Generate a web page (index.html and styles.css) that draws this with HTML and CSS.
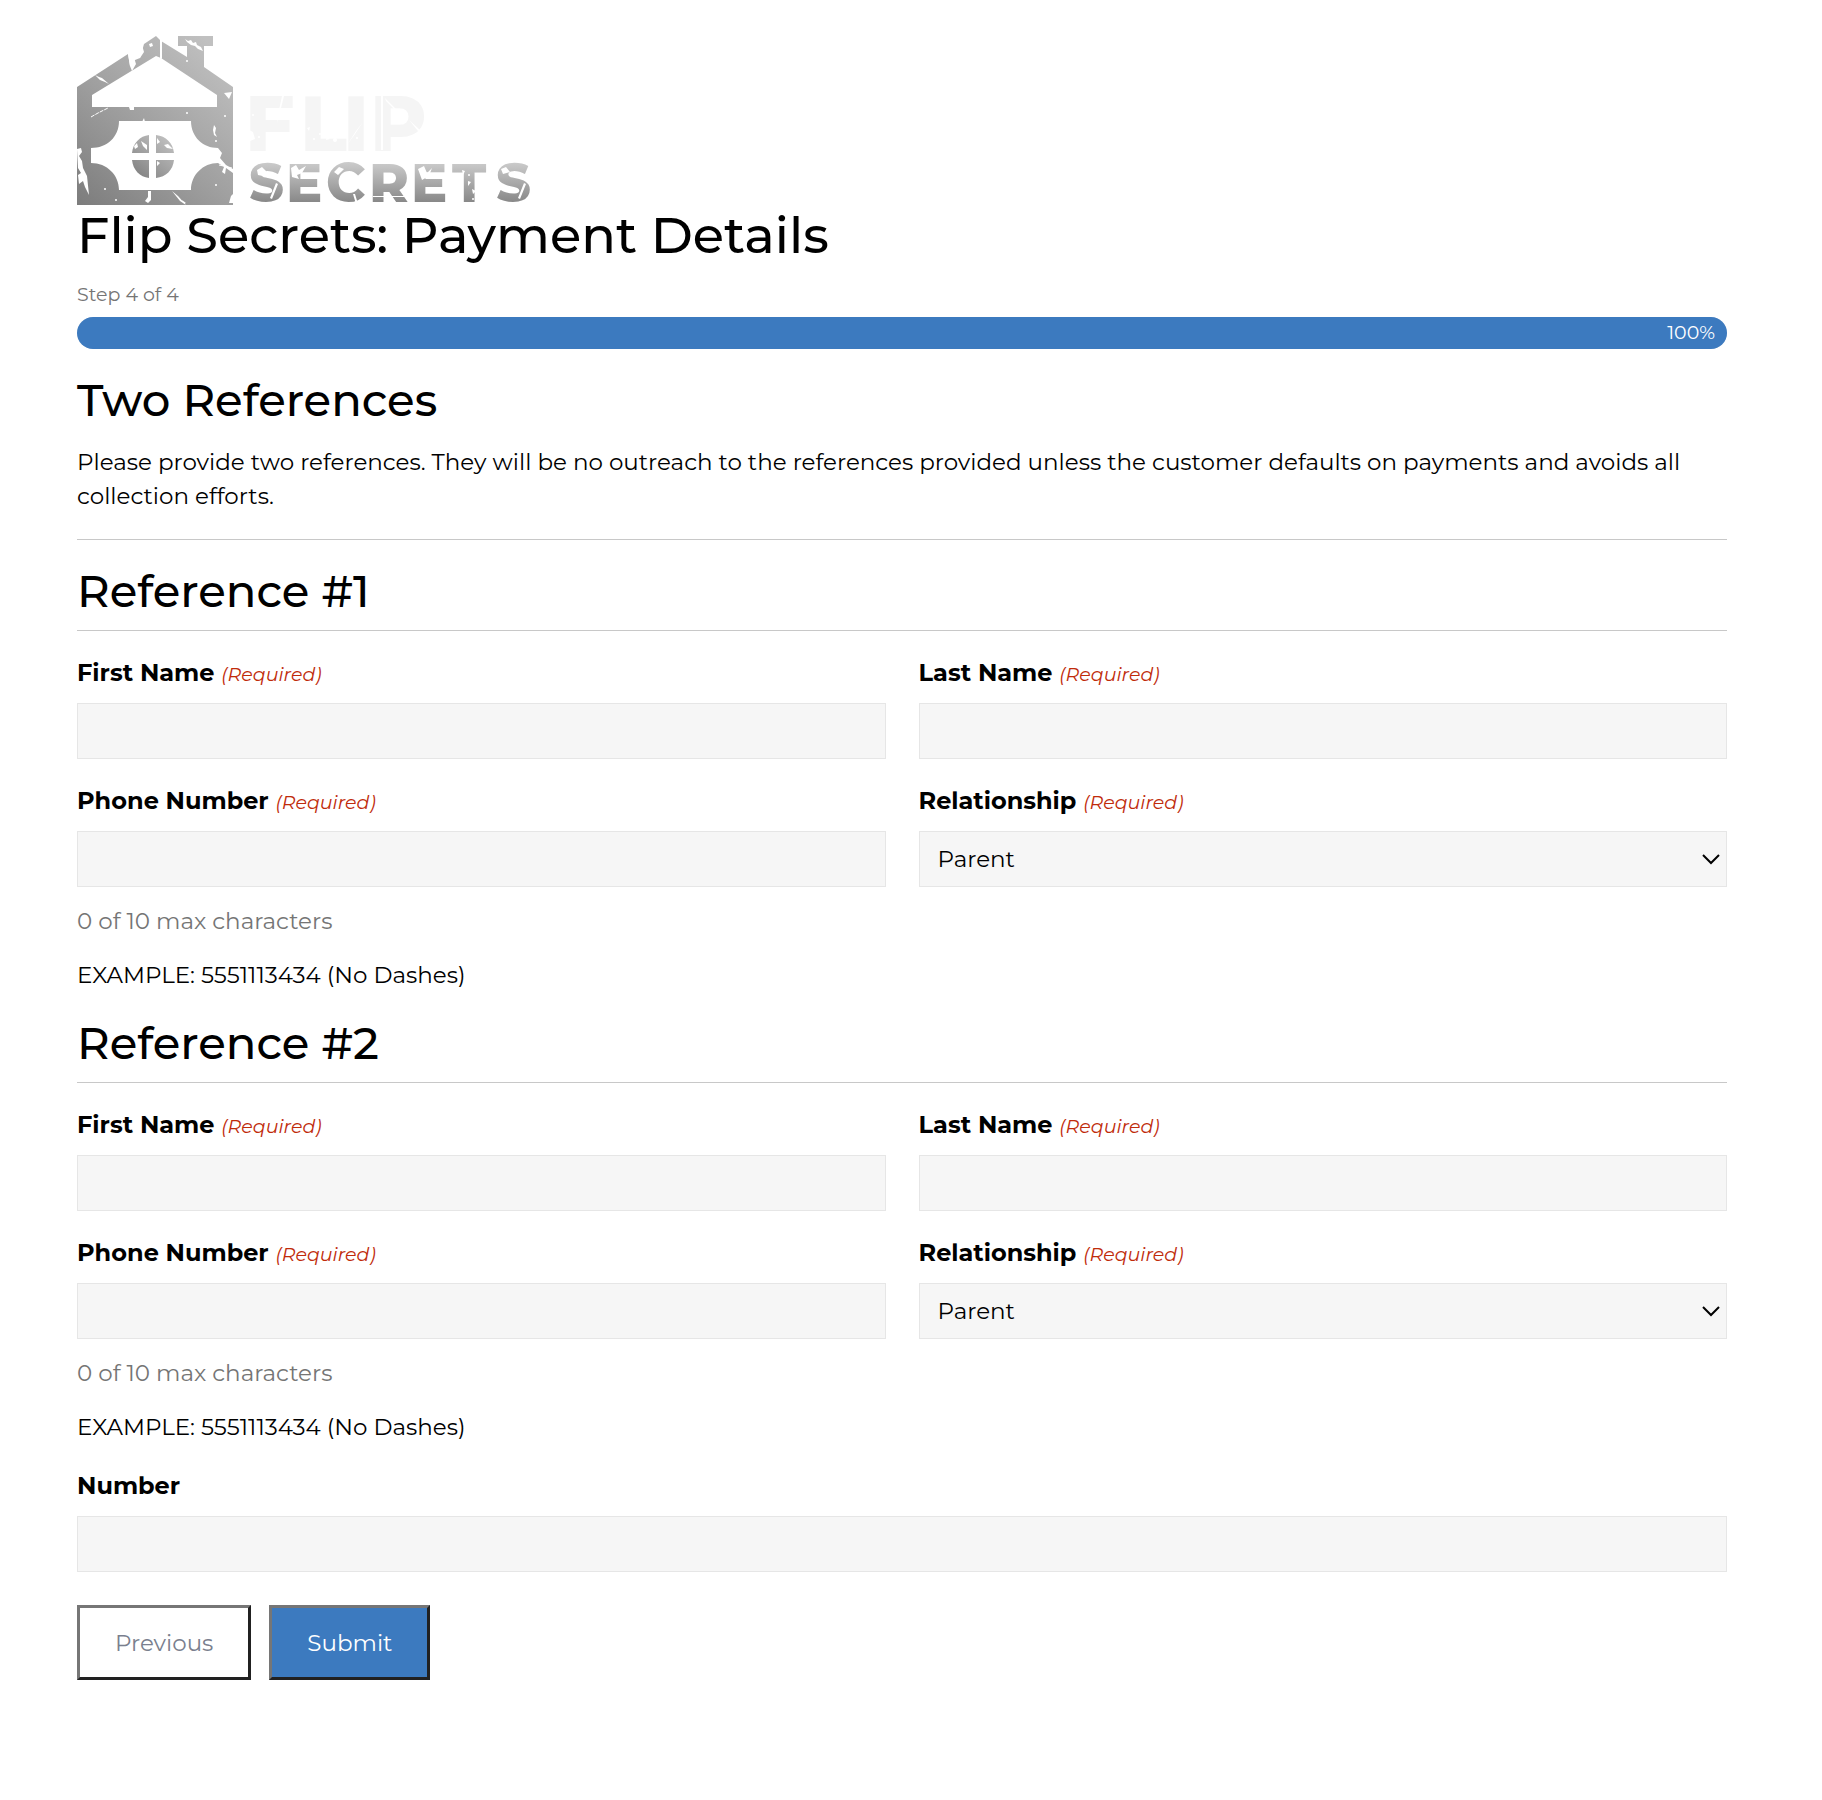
FILE: index.html
```html
<!DOCTYPE html>
<html lang="en">
<head>
<meta charset="utf-8">
<meta name="viewport" content="width=device-width, initial-scale=1">
<title>Flip Secrets: Payment Details</title>
<link rel="stylesheet" href="styles.css">
</head>
<body>
<main class="page">
  <svg class="logo" viewBox="0 0 464 170" role="img" aria-label="Flip Secrets">
    <defs>
      <linearGradient id="house" x1="0" y1="1" x2="0.8" y2="0">
        <stop offset="0" stop-color="#7c7c7c"/>
        <stop offset="0.5" stop-color="#a0a0a0"/>
        <stop offset="1" stop-color="#c0c0c0"/>
      </linearGradient>
      <linearGradient id="word" gradientUnits="userSpaceOnUse" x1="0" y1="126" x2="0" y2="168">
        <stop offset="0" stop-color="#cccccc"/>
        <stop offset="1" stop-color="#858585"/>
      </linearGradient>
    </defs>
    <path fill="url(#house)" fill-rule="evenodd" d="M0 51 51 18 53 30 58 24 63 22 67 8 79 0 83 4 84 5 110 21V10H101V0H136V10H127V31L156 51V169H0ZM15 59V71H140V59L84 22 79 20ZM42 85C42 101 30 112 14 112V127C30 127 42 139 42 154H114C114 139 126 127 141 127V112C126 112 114 101 114 85Z"/>
    <path fill="url(#house)" d="M72 99V117H55C56 107 63 100 72 99ZM79 99C89 100 96 107 97 117H79ZM55 124H72V142C63 141 56 134 55 124ZM79 124H97C96 134 89 141 79 142Z"/>
    <g class="wear">
      <path d="M83 3 85 5V23L83 22ZM51 18 55 15 59 28 55 35 53 30ZM18 39 22 41 25 42 32 48 28 46 23 44ZM61 12 65 9 67 16 63 22 60 21 63 17ZM72 8 75 7 76 10 73 11Z"/>
      <path d="M108 3 111 5 114 4 116 7 119 6 120 9 124 11 126 15 121 13 118 10 114 9 110 6ZM147 57 155 56 152 63ZM65 86 67 82 68 86ZM52 71H57V74H53Z"/>
      <path d="M137 89 139 92 138 97 140 101 137 99 136 94ZM0 113 4 112 5 116 2 120 5 125 6 132 10 140 12 159 8 151 6 145 2 148 1 139 4 137 1 132ZM141 112 145 117 143 122 149 129 156 133V137L149 132 148 138 145 136 147 131 141 127ZM71 155 74 155 74 164 71 167 68 165 71 161ZM95 155 101 160 109 169 103 165ZM154 160 156 158V167L152 167ZM105 164 109 167 107 168Z"/>
      <path d="M64 105 70 109V114L66 110ZM57 110 60 107 61 111 58 113ZM80 102 83 106 80 108ZM87 109 91 108 96 113 90 112ZM80 125 83 127 80 130Z"/>
      <path class="scratch" d="M14 81 21 77 31 72M142 129 155 132"/>
      <circle cx="110" cy="25" r="1"/><circle cx="148" cy="80" r="1"/><circle cx="110" cy="77" r="1"/><circle cx="139" cy="105" r="1"/><circle cx="28" cy="153" r="1"/><circle cx="139" cy="149" r="1"/><circle cx="39" cy="164" r="1"/>
    </g>
    <text class="word word-flip" x="168 223 266 293" y="115">FLIP</text>
    <text class="word word-secrets" x="172 209 249 292 334 375 419" y="166">SECRETS</text>
    <g class="wear">
      <path d="M205 60 207 60 200 88 202 74ZM172 94 176 96 178 103 173 105ZM230 92 233 91 232 95ZM250 100 253 103 249 104ZM286 86 278 98 270 109 279 95ZM304 60H306V114H304ZM308 62 320 74 319 75 309 65ZM332 84 343 94 341 95ZM197 78 203 76 208 74 202 83Z"/>
      <path d="M180 134 185 131 190 136 186 140 181 139ZM193 162 199 147 201 148 195 163ZM214 132 219 129 222 134 229 130 225 137 220 139 222 143 215 141ZM257 136 262 131 267 133 261 139ZM276 158 278 158 281 168 279 168ZM341 133 347 130 350 137 355 132 352 140 345 144ZM385 134 388 135 386 139ZM424 133 429 131 433 136 426 138ZM441 162 447 147 449 148 443 163ZM296 160H328V161H296ZM391 145 394 146 391 150ZM395 153 399 155 396 158Z"/>
      <circle cx="182" cy="101" r="1"/><circle cx="237" cy="103" r="1"/><circle cx="243" cy="98" r="1"/><circle cx="258" cy="104" r="2"/><circle cx="280" cy="102" r="1"/><circle cx="176" cy="79" r="1"/><circle cx="392" cy="139" r="1"/><circle cx="396" cy="163" r="1"/>
    </g>
  </svg>

  <form class="form" onsubmit="return false">
    <h1 class="title">Flip Secrets: Payment Details</h1>
    <p class="step">Step 4 of 4</p>
    <div class="progress" role="progressbar" aria-label="Form progress" aria-valuenow="100" aria-valuemin="0" aria-valuemax="100">
      <div class="progress-fill" style="width: 100%">100%</div>
    </div>

    <section class="intro">
      <h2 class="heading">Two References</h2>
      <p class="intro-text">Please provide two references. They will be no outreach to the references provided unless the customer defaults on payments and avoids all collection efforts.</p>
    </section>

    <section class="reference">
      <h2 class="heading heading-ruled">Reference #1</h2>
      <div class="fields">
        <div class="field">
          <label class="label" for="first1">First Name <span class="required">(Required)</span></label>
          <input class="control" id="first1" type="text" required>
        </div>
        <div class="field">
          <label class="label" for="last1">Last Name <span class="required">(Required)</span></label>
          <input class="control" id="last1" type="text" required>
        </div>
        <div class="field">
          <label class="label" for="phone1">Phone Number <span class="required">(Required)</span></label>
          <input class="control" id="phone1" type="text" maxlength="10" required>
          <p class="counter">0 of 10 max characters</p>
          <p class="example">EXAMPLE: 5551113434 (No Dashes)</p>
        </div>
        <div class="field">
          <label class="label" for="relation1">Relationship <span class="required">(Required)</span></label>
          <select class="control select" id="relation1" required><option>Parent</option><option>Sibling</option><option>Friend</option></select>
        </div>
      </div>
    </section>

    <section class="reference">
      <h2 class="heading heading-ruled">Reference #2</h2>
      <div class="fields">
        <div class="field">
          <label class="label" for="first2">First Name <span class="required">(Required)</span></label>
          <input class="control" id="first2" type="text" required>
        </div>
        <div class="field">
          <label class="label" for="last2">Last Name <span class="required">(Required)</span></label>
          <input class="control" id="last2" type="text" required>
        </div>
        <div class="field">
          <label class="label" for="phone2">Phone Number <span class="required">(Required)</span></label>
          <input class="control" id="phone2" type="text" maxlength="10" required>
          <p class="counter">0 of 10 max characters</p>
          <p class="example">EXAMPLE: 5551113434 (No Dashes)</p>
        </div>
        <div class="field">
          <label class="label" for="relation2">Relationship <span class="required">(Required)</span></label>
          <select class="control select" id="relation2" required><option>Parent</option><option>Sibling</option><option>Friend</option></select>
        </div>
      </div>
    </section>

    <div class="field number">
      <label class="label" for="number">Number</label>
      <input class="control" id="number" type="text">
    </div>

    <div class="actions">
      <button class="button button-previous" type="button">Previous</button>
      <button class="button button-submit" type="submit">Submit</button>
    </div>
  </form>
</main>
</body>
</html>
```
FILE: styles.css
```css
*, *::before, *::after { box-sizing: border-box; }

body {
  margin: 0;
  background: #fff;
  color: #000;
  font: 400 23px/34px Montserrat, Inter, sans-serif;
}

h1, h2, p { margin: 0; }

.page { padding: 36px 95px 120px 77px; }

.logo { display: block; width: 464px; max-width: 100%; height: auto; overflow: visible; }
.wear { fill: #fff; }
.scratch { fill: none; stroke: #fff; stroke-width: 1; stroke-dasharray: 4 1; }
.word { font-family: Montserrat, Inter, sans-serif; font-weight: 800; }
.word-flip { font-size: 77px; fill: #f5f5f5; }
.word-secrets { font-size: 54px; fill: url(#word); }

.title { font-size: 51px; font-weight: 500; line-height: 58px; }
.step { margin-top: 17px; color: #757575; font-size: 19px; line-height: 28px; }

.progress { margin-top: 8px; border-radius: 16px; background: #e8e8e8; }
.progress-fill {
  padding-right: 12px;
  border-radius: 16px;
  background: #3c7abf;
  color: #fff;
  font-size: 19px;
  line-height: 32px;
  text-align: right;
}

.heading { font-size: 45px; font-weight: 500; line-height: 56px; }
.intro { margin-top: 23px; padding-bottom: 26px; border-bottom: 1px solid #c8c8c8; }
.intro-text { margin-top: 17px; }

.reference { margin-top: 23px; }
.heading-ruled { padding-bottom: 11px; border-bottom: 1px solid #c8c8c8; }
.fields {
  display: grid;
  grid-template-columns: 1fr 1fr;
  gap: 25px 33px;
  margin-top: 25px;
}
.field { display: flex; flex-direction: column; min-width: 0; }
.label { font-size: 24px; font-weight: 700; line-height: 34px; }
.required { color: #c02b0a; font-size: 19px; font-style: italic; font-weight: 400; line-height: 20px; }

.control {
  width: 100%;
  height: 56px;
  margin: 13px 0 0;
  padding: 0 18px;
  border: 1px solid #e6e6e6;
  border-radius: 0;
  background-color: #f6f6f6;
  color: #000;
  font: inherit;
}
.select {
  appearance: none;
  background-image: url("data:image/svg+xml,%3Csvg xmlns='http://www.w3.org/2000/svg' viewBox='0 0 18 11'%3E%3Cpath d='M1 1l8 8 8-8' fill='none' stroke='%23000' stroke-width='2'/%3E%3C/svg%3E");
  background-position: right 6px center;
  background-repeat: no-repeat;
  background-size: 18px 11px;
}

.counter { margin-top: 17px; color: #757575; }
.example { margin-top: 20px; }

.number { margin-top: 25px; }

.actions { display: flex; gap: 18px; margin-top: 33px; }
.button {
  height: 75px;
  padding: 0 35px;
  border: 3px solid;
  border-color: #767676 #212121 #212121 #767676;
  font: inherit;
}
.button-previous { background: #fff; color: #7a7f8e; }
.button-submit { background: #3c7abf; color: #fff; }
```
